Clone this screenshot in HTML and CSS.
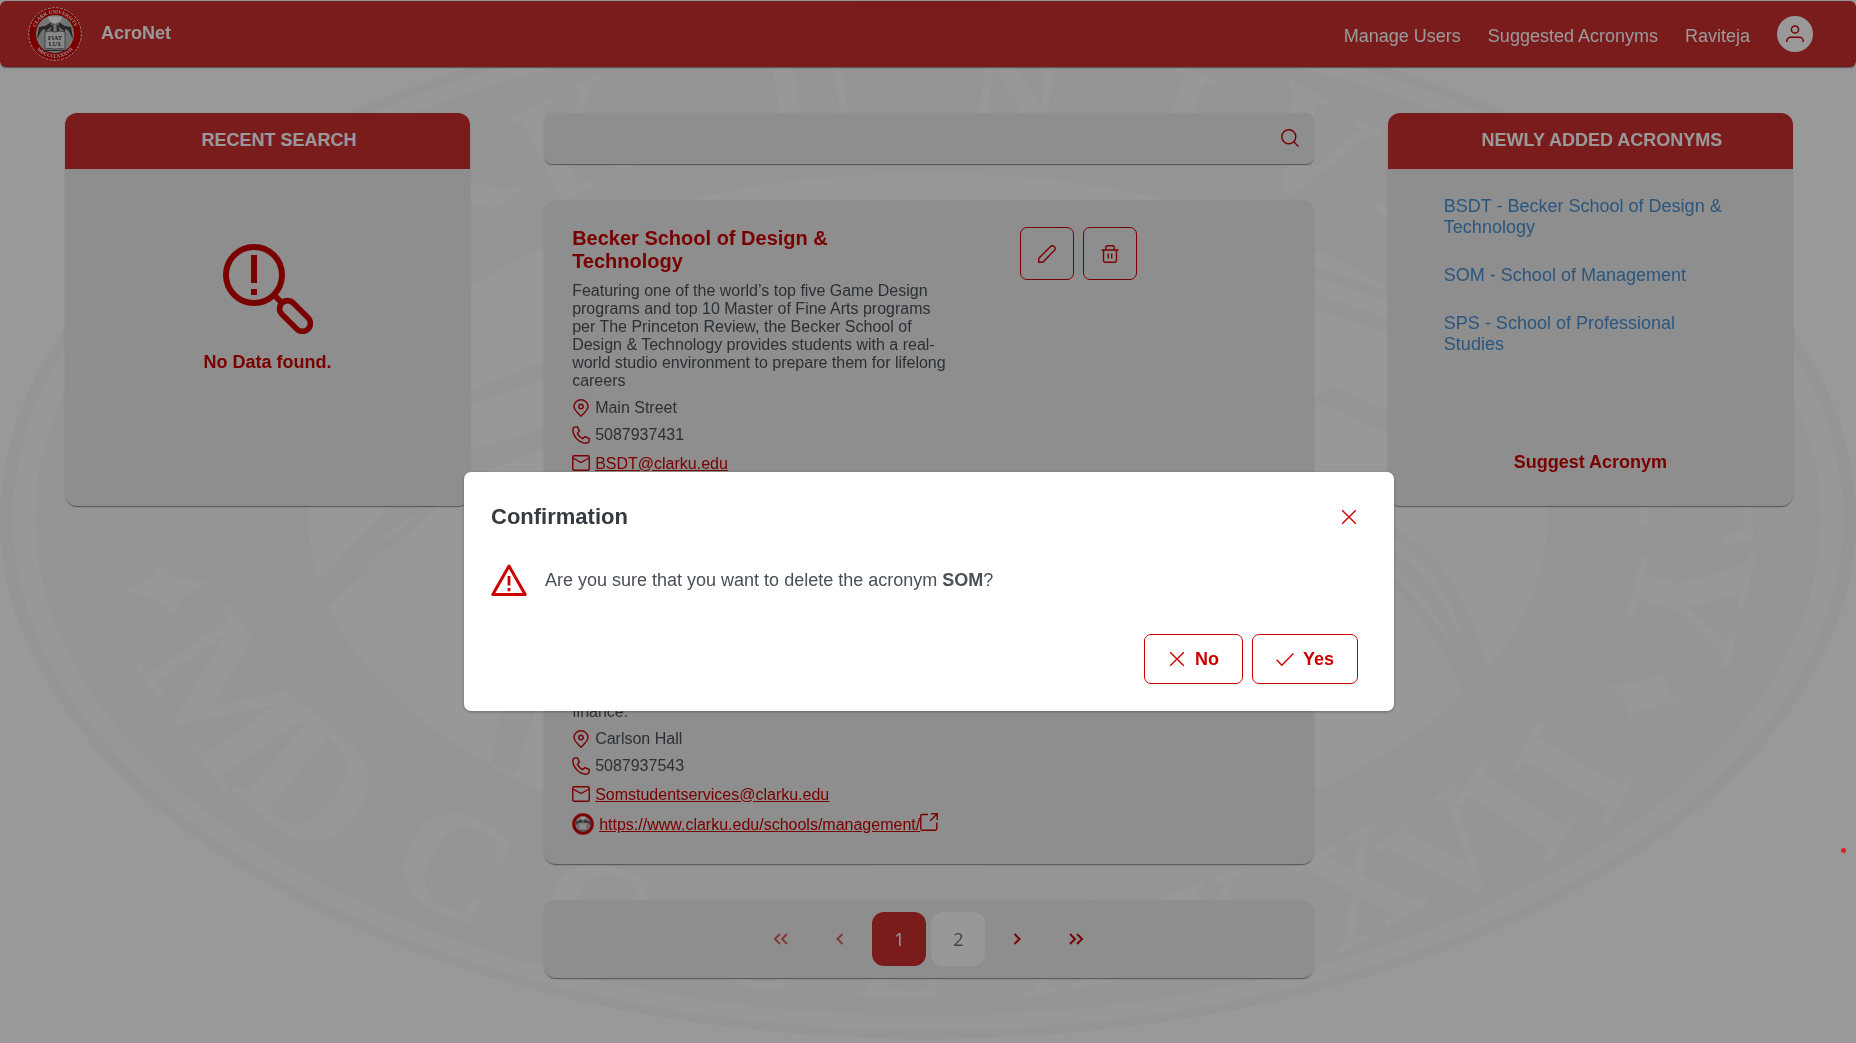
FILE: index.html
```html
<!DOCTYPE html>
<html lang="en">
<head>
<meta charset="utf-8">
<title>AcroNet</title>
<link rel="stylesheet" href="styles.css">
</head>
<body>
<svg class="sprite" aria-hidden="true">
  <symbol id="seal" viewBox="0 0 54 54">
    <circle cx="27" cy="27" r="27" fill="#c00"/>
    <circle cx="27" cy="27" r="26.300" fill="none" stroke="#fff" stroke-width=".9" stroke-dasharray="3 1"/>
    <circle cx="27" cy="27" r="19" fill="#c4c4c4"/>
    <path d="M27 17 9 31 11 20ZM27 17 45 31 43 20ZM25 14 17 26 14 21ZM29 14 37 26 40 21ZM26 15 21 26 25 26ZM28 15 33 26 29 26Z" fill="#444"/>
    <path d="M20 9.500h14q-1 7-7 7t-7-7Z" fill="#fff"/>
    <path d="M10 31q3-9 7-9v20q-4-2-7-11ZM44 31q-3-9-7-9v20q4-2 7-11Z" fill="#bbb"/>
    <path d="M17 25q5-2 10 0 5-2 10 0v17q-5-1-10 0-5-1-10 0Z" fill="#e4e4e4" stroke="#666" stroke-width=".9"/>
    <path d="M16 43.500h22" stroke="#444" stroke-width="1.200"/>
  </symbol>
  <symbol id="pin" viewBox="0 0 18 18"><path d="M9 17.200C5.500 13.800 2 10.800 2 7.500a7 6.800 0 0 1 14 0c0 3.300-3.500 6.300-7 9.700Z"/><circle cx="9" cy="7.500" r="2.200"/></symbol>
  <symbol id="phone" viewBox="0 0 18 18"><path d="M3.200.9c-1.300.3-2.400 1.400-2.400 3C1.200 10.800 7 16.800 14 17.200c1.700 0 2.900-1 3.200-2.500v-2.200l-4.200-1.900-2.400 2C8.300 11.500 6.300 9.500 5.400 7.400l2-2.400L5.500.9Z"/></symbol>
  <symbol id="mail" viewBox="0 0 18 18"><rect x=".8" y="1.800" width="16.400" height="14.400" rx="1.200"/><path d="m1 4 8 4.500L17 4"/></symbol>
  <symbol id="external" viewBox="0 0 18 18"><path d="M8 1.500H2A1.200 1.200 0 0 0 .8 2.700v13.100A1.400 1.400 0 0 0 2.200 17.200h13.200a1.400 1.400 0 0 0 1.400-1.400V9.500M11 .8h6.200V7M17 1l-7 7"/></symbol>
  <symbol id="pencil" viewBox="0 0 18 18"><path d="M.8 17.200v-4L12.600 1.500a2.400 2.400 0 0 1 3.600 0l.3.300a2.400 2.400 0 0 1 0 3.500L4.800 17.200Z"/></symbol>
  <symbol id="trash" viewBox="0 0 18 18"><path d="M.5 5h17M2.500 5v10.600q0 1.600 1.600 1.600h9.800q1.600 0 1.600-1.600V5M4.800 4.800V2.300Q4.800.8 6.300.8h5.400q1.500 0 1.500 1.500v2.500M7.300 8.500v5M10.700 8.500v5"/></symbol>
  <symbol id="search" viewBox="0 0 18 18"><circle cx="7.800" cy="7.800" r="7"/><path d="m12.800 12.800 4.600 4.600"/></symbol>
  <symbol id="cross" viewBox="0 0 18 18"><path d="m2.200 2.200 13.600 13.600M15.800 2.200 2.200 15.800"/></symbol>
  <symbol id="check" viewBox="0 0 18 18"><path d="m.6 9.800 5.200 5.400L17.400 3.500"/></symbol>
</svg>

<svg class="watermark" viewBox="0 0 1856 1043" preserveAspectRatio="xMidYMid slice" aria-hidden="true">
  <ellipse class="wm-dark" cx="928" cy="519" rx="928" ry="520"/>
  <ellipse class="wm-light" cx="928" cy="519" rx="915" ry="511"/>
  <ellipse class="wm-dark" cx="928" cy="519" rx="893" ry="497"/>
  <ellipse class="wm-light" cx="928" cy="520" rx="619" ry="347"/>
  <path class="wm-dark" d="M319 580 395 500l75-50 75-22v20l-75 30L329 606l-18 10ZM470 390l76-30v18l-76 28Z"/>
  <path class="wm-light" d="m345 573 55-50 30-17-22 17ZM352 574l60-42 60-34-60 42Z"/>
  <path class="wm-dark" d="M1313 400l75 33v-22l-55-26ZM1313 265l75 26v9l-75-22ZM1313 293l75 25v14l-75-22Z"/>
  <path class="wm-dark" d="M1390 525c50 28 78 70 99 147l-22 30c-20-45-40-80-77-120Z"/>
  <path class="wm-light" d="M1390 536c44 26 60 60 80 120-26-56-46-86-80-107ZM1390 562c34 30 56 66 74 104-20-32-44-68-74-92Z"/>
  <path class="wm-dark" d="m504 700 32 8-20 66-26-10Z"/>
  <path class="wm-light" d="M160 562q12 22 52 20-34 12-38 33-18-24-54-22 34-12 40-31ZM1665 671q0 28 23 33-30-4-60 14 0-28-27-33 34 4 64-14Z"/>
  <g class="wm-letters">
    <g class="wm-large">
      <text transform="translate(181 416) rotate(-76)">C</text>
      <text transform="translate(242 325) rotate(-63)">L</text>
      <text transform="translate(330 249) rotate(-51)">A</text>
      <text transform="translate(1632 345) rotate(66)">S</text>
      <text transform="translate(1675 416) rotate(76)">I</text>
      <text transform="translate(1696 491) rotate(86)">T</text>
      <text transform="translate(1690 598) rotate(104)">Y</text>
      <text transform="translate(227 697) rotate(55)">M</text>
      <text transform="translate(313 783) rotate(40)">D</text>
      <text transform="translate(1515 810) rotate(-57)">I</text>
      <text transform="translate(1572 772) rotate(-60)">I</text>
    </g>
    <g class="wm-medium">
      <text transform="translate(444 185) rotate(-39)">R</text>
      <text transform="translate(578 136) rotate(-27)">K</text>
      <text transform="translate(1313 147) rotate(30)">V</text>
      <text transform="translate(1443 200) rotate(42)">E</text>
      <text transform="translate(1551 267) rotate(54)">R</text>
      <text transform="translate(454 862) rotate(28)">C</text>
      <text transform="translate(596 912) rotate(18)">C</text>
      <text transform="translate(1358 885) rotate(-30)">X</text>
      <text transform="translate(1446 850) rotate(-40)">V</text>
    </g>
    <g class="wm-small">
      <text transform="translate(811 93) rotate(-8)">U</text>
      <text transform="translate(1016 92) rotate(7)">N</text>
      <text transform="translate(1183 112) rotate(19)">I</text>
      <text transform="translate(755 942) rotate(10)">C</text>
      <text transform="translate(901 953) rotate(2)">L</text>
      <text transform="translate(1062 946) rotate(-10)">X</text>
      <text transform="translate(1217 921) rotate(-20)">X</text>
    </g>
  </g>
</svg>

<header class="topbar">
  <svg class="topbar-logo" viewBox="0 0 54 54" role="img" aria-label="Clark University">
    <use href="#seal"/>
    <path id="seal-top" d="M7.500 34A20.700 20.700 0 1 1 46.500 34" fill="none"/>
    <path id="seal-bottom" d="M3.400 30A23.800 23.800 0 0 0 50.600 30" fill="none"/>
    <text class="seal-ring"><textPath href="#seal-top" startOffset="50%">CLARK UNIVERSITY</textPath></text>
    <text class="seal-ring"><textPath href="#seal-bottom" startOffset="50%">MDCCCLXXXVII</textPath></text>
    <text class="seal-word" x="27" y="33">FIAT</text>
    <text class="seal-word" x="27" y="39">LUX</text>
  </svg>
  <h1 class="topbar-title">AcroNet</h1>
  <nav class="topbar-nav">
    <a href="#users">Manage Users</a>
    <a href="#suggested">Suggested Acronyms</a>
    <a href="#profile">Raviteja</a>
    <button class="avatar" type="button" aria-label="Account">
      <svg viewBox="0 0 18 18"><circle cx="9" cy="4.500" r="3.600"/><path d="M.8 17v-1.200c0-2 2-3.600 4-3.600h8.400c2 0 4 1.600 4 3.600V17"/></svg>
    </button>
  </nav>
</header>

<main class="layout">
  <aside class="card">
    <h2 class="card-title">RECENT SEARCH</h2>
    <div class="empty">
      <svg class="empty-icon" viewBox="0 0 90 90" aria-hidden="true">
        <circle cx="31" cy="31" r="28" stroke-width="6"/>
        <path d="M31 11v28M31 45v6" stroke-width="6"/>
        <path d="m51 51 7 7" stroke-width="6"/>
        <rect x="-8" y="-18.500" width="16" height="37" rx="8" stroke-width="5.600" transform="translate(72 72) rotate(-45)"/>
      </svg>
      <p>No Data found.</p>
    </div>
  </aside>

  <div class="center">
    <form class="search" role="search">
      <input type="search" aria-label="Search acronyms">
      <button type="submit" aria-label="Search"><svg class="icon"><use href="#search"/></svg></button>
    </form>

    <section class="results">
      <article class="result">
        <div>
          <h3>Becker School of Design &amp; Technology</h3>
          <p>Featuring one of the world’s top five Game Design programs and top 10 Master of Fine Arts programs per The Princeton Review, the Becker School of Design &amp; Technology provides students with a real-world studio environment to prepare them for lifelong careers</p>
          <ul class="contact">
            <li><svg class="icon"><use href="#pin"/></svg>Main Street</li>
            <li><svg class="icon"><use href="#phone"/></svg>5087937431</li>
            <li class="tall"><svg class="icon"><use href="#mail"/></svg><a href="mailto:BSDT@clarku.edu">BSDT@clarku.edu</a></li>
            <li class="tall site"><svg class="site-logo"><use href="#seal"/></svg><a href="https://www.clarku.edu/schools/bsdt/">https://www.clarku.edu/schools/bsdt/</a><svg class="icon site-icon"><use href="#external"/></svg></li>
          </ul>
        </div>
        <div class="actions">
          <button type="button" aria-label="Edit BSDT"><svg class="icon"><use href="#pencil"/></svg></button>
          <button type="button" aria-label="Delete BSDT"><svg class="icon"><use href="#trash"/></svg></button>
        </div>
      </article>

      <article class="result">
        <div>
          <h3>School of Management</h3>
          <p>The School of Management prepares its students to lead with purpose in a changing world.<br>Small classes and close work with faculty build practical skills, and graduates of every program go on to rewarding careers in accounting, analytics, marketing, management and<br>finance.</p>
          <ul class="contact">
            <li><svg class="icon"><use href="#pin"/></svg>Carlson Hall</li>
            <li><svg class="icon"><use href="#phone"/></svg>5087937543</li>
            <li class="tall"><svg class="icon"><use href="#mail"/></svg><a href="mailto:Somstudentservices@clarku.edu">Somstudentservices@clarku.edu</a></li>
            <li class="tall site"><svg class="site-logo"><use href="#seal"/></svg><a href="https://www.clarku.edu/schools/management/">https://www.clarku.edu/schools/management/</a><svg class="icon site-icon"><use href="#external"/></svg></li>
          </ul>
        </div>
        <div class="actions">
          <button type="button" aria-label="Edit SOM"><svg class="icon"><use href="#pencil"/></svg></button>
          <button type="button" aria-label="Delete SOM"><svg class="icon"><use href="#trash"/></svg></button>
        </div>
      </article>
    </section>

    <nav class="pager" aria-label="Pages">
      <button type="button" aria-label="First page" disabled><svg viewBox="0 0 18 18"><path d="M8 4 3 9l5 5M15 4l-5 5 5 5"/></svg></button>
      <button type="button" aria-label="Previous page" disabled><svg viewBox="0 0 18 18"><path d="M11.500 4l-5 5 5 5"/></svg></button>
      <button type="button" class="page current" aria-current="page">1</button>
      <button type="button" class="page">2</button>
      <button type="button" aria-label="Next page"><svg viewBox="0 0 18 18"><path d="m6.500 4 5 5-5 5"/></svg></button>
      <button type="button" aria-label="Last page"><svg viewBox="0 0 18 18"><path d="m3 4 5 5-5 5M10 4l5 5-5 5"/></svg></button>
    </nav>
  </div>

  <aside class="card">
    <h2 class="card-title">NEWLY ADDED ACRONYMS</h2>
    <ul class="newest">
      <li><a href="#bsdt">BSDT - Becker School of Design &amp; Technology</a></li>
      <li><a href="#som">SOM - School of Management</a></li>
      <li><a href="#sps">SPS - School of Professional Studies</a></li>
    </ul>
    <button class="suggest" type="button">Suggest Acronym</button>
  </aside>
</main>

<div class="overlay">
  <section class="dialog" role="dialog" aria-modal="true" aria-labelledby="dialog-title">
    <div class="dialog-head">
      <h2 id="dialog-title">Confirmation</h2>
      <button type="button" aria-label="Close"><svg class="icon"><use href="#cross"/></svg></button>
    </div>
    <div class="dialog-body">
      <svg class="warning" viewBox="0 0 36 36" aria-hidden="true"><path d="M18 4 1.800 32.400h32.400Z" stroke-width="3" stroke-linejoin="round"/><path d="M18 14v9.500M18 26v3.200" stroke-width="2.800"/></svg>
      <p>Are you sure that you want to delete the acronym <strong>SOM</strong>?</p>
    </div>
    <div class="dialog-foot">
      <button type="button"><svg class="icon"><use href="#cross"/></svg>No</button>
      <button type="button"><svg class="icon"><use href="#check"/></svg>Yes</button>
    </div>
  </section>
  <span class="marker"></span>
</div>
</body>
</html>
```
FILE: styles.css
```css
:root {
  --red: #c00;
  --bar: #cd2f2f;
  --panel: #ededed;
  --text: #495057;
  --shadow: 0 2px 1px -1px rgba(0, 0, 0, .35), 0 1px 2px rgba(0, 0, 0, .15);
}

* { box-sizing: border-box; }

body {
  margin: 0;
  min-height: 100vh;
  background: #fff;
  color: var(--text);
  font: 18px/21px "Liberation Sans", Arial, sans-serif;
}

h1, h2, h3, p, ul { margin: 0; padding: 0; }
ul { list-style: none; }
a { color: inherit; text-decoration: none; }

button {
  display: inline-flex;
  align-items: center;
  justify-content: center;
  padding: 0;
  border: 0;
  background: none;
  color: var(--red);
  font: inherit;
  cursor: pointer;
}

svg { flex: none; }

.sprite { position: absolute; width: 0; height: 0; }

.icon {
  width: 18px;
  height: 18px;
  fill: none;
  stroke: var(--red);
  stroke-width: 1.4;
  overflow: visible;
}

.seal-ring, .seal-word {
  fill: #fff;
  font: bold 5px "Liberation Serif", serif;
  text-anchor: middle;
}
.seal-word { fill: #333; font-size: 6px; }

/* Background seal */
.watermark {
  position: fixed;
  inset: 0;
  z-index: -1;
  width: 100%;
  height: 100%;
}
.wm-dark { fill: #f8f8f8; }
.wm-light { fill: #fefefe; }
.wm-letters { fill: #fdfdfd; }
.wm-letters text {
  font-family: "Liberation Serif", serif;
  font-weight: bold;
  text-anchor: middle;
  dominant-baseline: central;
}
.wm-large { font-size: 170px; }
.wm-medium { font-size: 150px; }
.wm-small { font-size: 130px; }

/* Top bar */
.topbar {
  display: flex;
  align-items: center;
  height: 66px;
  margin-top: 1px;
  padding: 0 43px 0 28px;
  border-radius: 6px;
  background: var(--bar);
  box-shadow: var(--shadow);
  color: #fff;
}
.topbar-logo { width: 54px; height: 54px; }
.topbar-title { margin: 0 auto 2px 19px; font-size: 18px; }
.topbar-nav { display: flex; align-items: center; gap: 27px; }
.topbar-nav a { padding-top: 4px; }

.avatar {
  width: 36px;
  height: 36px;
  border-radius: 50%;
  background: #fff;
}
.avatar svg {
  width: 18px;
  height: 18px;
  fill: none;
  stroke: var(--red);
  stroke-width: 1.5;
}

/* Columns */
.layout {
  display: grid;
  grid-template-columns: 1fr 1.9fr 1fr;
  align-items: start;
  gap: 74px;
  padding: 46px 63px 48px 65px;
}

.card {
  display: flex;
  flex-direction: column;
  min-height: 393px;
  border-radius: 12px;
  background: var(--panel);
  box-shadow: var(--shadow);
}
.card-title {
  height: 56px;
  padding: 17px 0 0 23px;
  border-radius: 12px 12px 0 0;
  background: var(--bar);
  color: #fff;
  font-size: 18px;
  text-align: center;
}

.empty {
  display: flex;
  flex-direction: column;
  align-items: center;
  gap: 18px;
  padding-top: 75px;
  color: var(--red);
  font-weight: bold;
}
.empty-icon {
  width: 90px;
  height: 90px;
  fill: none;
  stroke: var(--red);
}

.newest {
  display: flex;
  flex-direction: column;
  gap: 27px;
  padding: 27px 56px;
  color: #4890d3;
}
.suggest { margin: auto auto 33px; font-weight: bold; }

.center { display: flex; flex-direction: column; gap: 36px; }

.search {
  display: flex;
  height: 51px;
  padding: 0 15px 2px 0;
  border-radius: 8px;
  background: var(--panel);
  box-shadow: var(--shadow);
}
.search input {
  flex: 1;
  border: 0;
  padding: 0 16px;
  outline: 0;
  background: none;
  color: var(--text);
  font: inherit;
}

.results {
  display: flex;
  flex-direction: column;
  gap: 55px;
  padding: 27px 28px 25px;
  border-radius: 12px;
  background: var(--panel);
  box-shadow: var(--shadow);
}
.result {
  display: grid;
  grid-template-columns: minmax(0, 380px) auto;
  justify-content: start;
  align-items: start;
  gap: 68px;
}
.result h3 {
  margin-bottom: 9px;
  padding-right: 24px;
  color: var(--red);
  font-size: 20px;
  line-height: 23px;
}
.result p { font-size: 16px; line-height: 18px; }

.contact { padding-top: 4px; font-size: 16px; }
.contact li { display: flex; align-items: center; gap: 5px; height: 27px; }
.contact .tall { height: 30px; }
.contact a { color: var(--red); text-decoration: underline; }
.contact .site { gap: 0; }
.site-logo { width: 22px; height: 22px; margin-right: 5px; }
.site-icon { margin-bottom: 4px; }

.actions { display: flex; gap: 9px; }
.actions button {
  width: 54px;
  height: 53px;
  border: 1px solid var(--red);
  border-radius: 7px;
}

.pager {
  display: flex;
  align-items: center;
  justify-content: center;
  gap: 5px;
  height: 78px;
  border-radius: 12px;
  background: var(--panel);
  box-shadow: var(--shadow);
}
.pager button { width: 54px; height: 54px; border-radius: 12px; }
.pager button:disabled { opacity: .6; }
.pager svg {
  width: 18px;
  height: 18px;
  fill: none;
  stroke: var(--red);
  stroke-width: 2;
}
.pager .page {
  background: #fdfdfd;
  color: #6c757d;
  font-family: "Open Sans", "Noto Sans", sans-serif;
}
.pager .current { background: var(--bar); color: #fff; }

/* Confirmation dialog */
.overlay {
  position: fixed;
  inset: 0;
  display: flex;
  align-items: center;
  justify-content: center;
  padding: 140px 0 0 2px;
  background: rgba(0, 0, 0, .4);
}
.dialog {
  width: calc(50vw + 2px);
  padding: 27px 36px 27px 27px;
  border-radius: 7px;
  background: #fff;
  box-shadow: 0 1px 3px rgba(0, 0, 0, .3);
}
.dialog-head {
  display: flex;
  align-items: center;
  justify-content: space-between;
  height: 36px;
}
.dialog-head h2 { padding-bottom: 2px; color: #343a40; font-size: 22px; }
.dialog-body {
  display: flex;
  align-items: center;
  gap: 18px;
  padding: 27px 0 36px;
}
.warning {
  width: 36px;
  height: 36px;
  fill: none;
  stroke: var(--red);
}
.dialog-foot { display: flex; justify-content: flex-end; gap: 9px; }
.dialog-foot button {
  gap: 9px;
  height: 50px;
  padding: 0 23px;
  border: 1px solid var(--red);
  border-radius: 7px;
  font-weight: bold;
}

.marker {
  position: absolute;
  right: 10px;
  bottom: 190px;
  width: 5px;
  height: 5px;
  border-radius: 50%;
  background: #e02020;
}
```
